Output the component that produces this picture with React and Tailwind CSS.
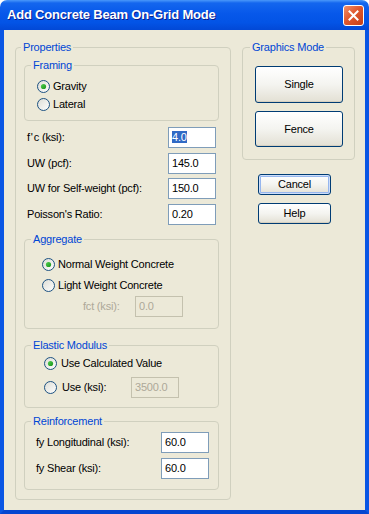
const GroupBox = ({ title, className = "", legendClass = "ml-[6px]", children }) => {
  return (
    <fieldset className={`border border-[#D0D0BF] rounded-[4px] p-0 m-0 ${className}`}>
      <legend className={`px-[2px] leading-[13px] text-[#0046D5] ${legendClass}`}>{title}</legend>
      {children}
    </fieldset>
  );
};

const Radio = ({ checked }) => {
  return (
    <svg width="13" height="13" viewBox="0 0 13 13" className="shrink-0">
      <defs>
        <linearGradient id="radioBg" x1="0" y1="0" x2="1" y2="1">
          <stop offset="0" stopColor="#DCDCD4" />
          <stop offset="1" stopColor="#FFFFFF" />
        </linearGradient>
        <linearGradient id="radioDot" x1="0" y1="0" x2="1" y2="1">
          <stop offset="0" stopColor="#55D055" />
          <stop offset="1" stopColor="#169216" />
        </linearGradient>
      </defs>
      <circle cx="6.5" cy="6.5" r="6" fill="url(#radioBg)" stroke="#1C5180" strokeWidth="1" />
      {checked && <circle cx="6.5" cy="6.5" r="2.6" fill="url(#radioDot)" />}
    </svg>
  );
};

const Edit = ({ value, selected, disabled }) => {
  if (disabled) {
    return (
      <div className="w-[48px] h-[21px] border border-[#C4C1AE] bg-[#ECE9D8] text-[#ACA899] pl-[3px] leading-[19px]">
        {value}
      </div>
    );
  }
  return (
    <div className="w-[48px] h-[21px] border border-[#7F9DB9] bg-white pl-[3px] leading-[19px]">
      {selected ? <span className="bg-[#316AC5] text-white">{value}</span> : value}
    </div>
  );
};

const XPButton = ({ label, className = "", isDefault }) => {
  return (
    <div
      className={`flex items-center justify-center rounded-[3px] border border-[#003C74] bg-gradient-to-b from-white via-[#F4F4F0] to-[#E3E0D4] ${
        isDefault ? "shadow-[inset_0_0_0_1px_#CEDEF9,inset_0_0_0_2px_#96B6EE]" : "shadow-[inset_0_-1px_0_#D6D0C0]"
      } ${className}`}
    >
      {label}
    </div>
  );
};

const PropRow = ({ label, value, selected, className = "" }) => (
  <div className={`flex items-center justify-between w-[195px] h-[21px] pl-[3px] pr-[3px] ${className}`}>
    <span>{label}</span>
    <Edit value={value} selected={selected} />
  </div>
);

const App = () => {
  return (
    <div className="w-[369px] h-[514px] flex flex-col bg-white font-['Liberation_Sans',Arial,sans-serif] text-[11px] tracking-[-0.2px] text-black">
      {/* title bar */}
      <div className="h-[30px] shrink-0 flex items-center justify-between pl-[7px] pr-[5px] rounded-t-[7px] bg-[linear-gradient(to_bottom,#4A98FA_0%,#1466EE_10%,#0758EA_45%,#0354E6_75%,#0248D6_100%)]">
        <span className="text-white font-bold text-[13px] tracking-[-0.2px] [text-shadow:1px_1px_0_#0A1B8A]">
          Add Concrete Beam On-Grid Mode
        </span>
        <div className="w-[21px] h-[21px] rounded-[3px] border border-white flex items-center justify-center bg-[linear-gradient(135deg,#F0906A_0%,#E0582F_45%,#C53F18_100%)]">
          <svg width="11" height="11" viewBox="0 0 11 11">
            <path d="M1.5 1.5 L9.5 9.5 M9.5 1.5 L1.5 9.5" stroke="white" strokeWidth="2" strokeLinecap="square" />
          </svg>
        </div>
      </div>

      {/* body */}
      <div className="flex-1 flex bg-[#ECE9D8] border-x-4 border-b-4 border-x-[#0A56E4] border-b-[#0546D0] pl-[11px] pt-[11px]">
        {/* Properties */}
        <GroupBox title="Properties" legendClass="ml-[5px]" className="w-[216px] self-start">
          <div className="pl-[8px] pt-[5px] pb-[9px]">
            <GroupBox title="Framing" className="w-[195px]">
              <div className="pt-[5px] pb-[7px]">
                <div className="flex items-center h-[18px] pl-[12px] gap-[3px]">
                  <Radio checked />
                  <span>Gravity</span>
                </div>
                <div className="flex items-center h-[18px] pl-[12px] gap-[3px]">
                  <Radio />
                  <span>Lateral</span>
                </div>
              </div>
            </GroupBox>

            <PropRow
              label={
                <>
                  f<span className="px-[1px]">'</span>c (ksi):
                </>
              }
              value="4.0"
              selected
              className="mt-[6px]"
            />
            <PropRow label="UW (pcf):" value="145.0" className="mt-[5px]" />
            <PropRow label="UW for Self-weight (pcf):" value="150.0" className="mt-[4px]" />
            <PropRow label="Poisson's Ratio:" value="0.20" className="mt-[5px]" />

            <GroupBox title="Aggregate" className="w-[195px] mt-[8px]">
              <div className="pt-[9px] pb-[11px]">
                <div className="flex items-center h-[18px] pl-[17px] gap-[3px]">
                  <Radio checked />
                  <span>Normal Weight Concrete</span>
                </div>
                <div className="flex items-center h-[18px] pl-[17px] gap-[3px] mt-[3px]">
                  <Radio />
                  <span>Light Weight Concrete</span>
                </div>
                <div className="flex items-center h-[21px] pl-[58px] mt-[2px]">
                  <span className="w-[52px] text-[#ACA899]">fct (ksi):</span>
                  <Edit value="0.0" disabled />
                </div>
              </div>
            </GroupBox>

            <GroupBox title="Elastic Modulus" className="w-[195px] mt-[10px]">
              <div className="pt-[2px] pb-[9px]">
                <div className="flex items-center h-[18px] pl-[19px] gap-[4px]">
                  <Radio checked />
                  <span>Use Calculated Value</span>
                </div>
                <div className="flex items-center h-[21px] pl-[19px] mt-[5px]">
                  <Radio />
                  <span className="w-[74px] pl-[5px]">Use (ksi):</span>
                  <Edit value="3500.0" disabled />
                </div>
              </div>
            </GroupBox>

            <GroupBox title="Reinforcement" className="w-[195px] mt-[7px]">
              <div className="pt-[4px] pb-[10px]">
                <div className="flex items-center justify-between h-[21px] pl-[11px] pr-[9px]">
                  <span>fy Longitudinal (ksi):</span>
                  <Edit value="60.0" />
                </div>
                <div className="flex items-center justify-between h-[21px] pl-[11px] pr-[9px] mt-[5px]">
                  <span>fy Shear (ksi):</span>
                  <Edit value="60.0" />
                </div>
              </div>
            </GroupBox>
          </div>
        </GroupBox>

        {/* right column */}
        <div className="flex flex-col ml-[11px]">
          <GroupBox title="Graphics Mode" legendClass="ml-[7px]" className="w-[113px]">
            <div className="pl-[12px] pt-[12px] pb-[12px]">
              <XPButton label="Single" className="w-[88px] h-[37px]" />
              <XPButton label="Fence" className="w-[88px] h-[36px] mt-[8px]" />
            </div>
          </GroupBox>
          <XPButton label="Cancel" isDefault className="w-[73px] h-[21px] mt-[14px] ml-[16px]" />
          <XPButton label="Help" className="w-[73px] h-[21px] mt-[8px] ml-[16px]" />
        </div>
      </div>
    </div>
  );
};

export default App;
